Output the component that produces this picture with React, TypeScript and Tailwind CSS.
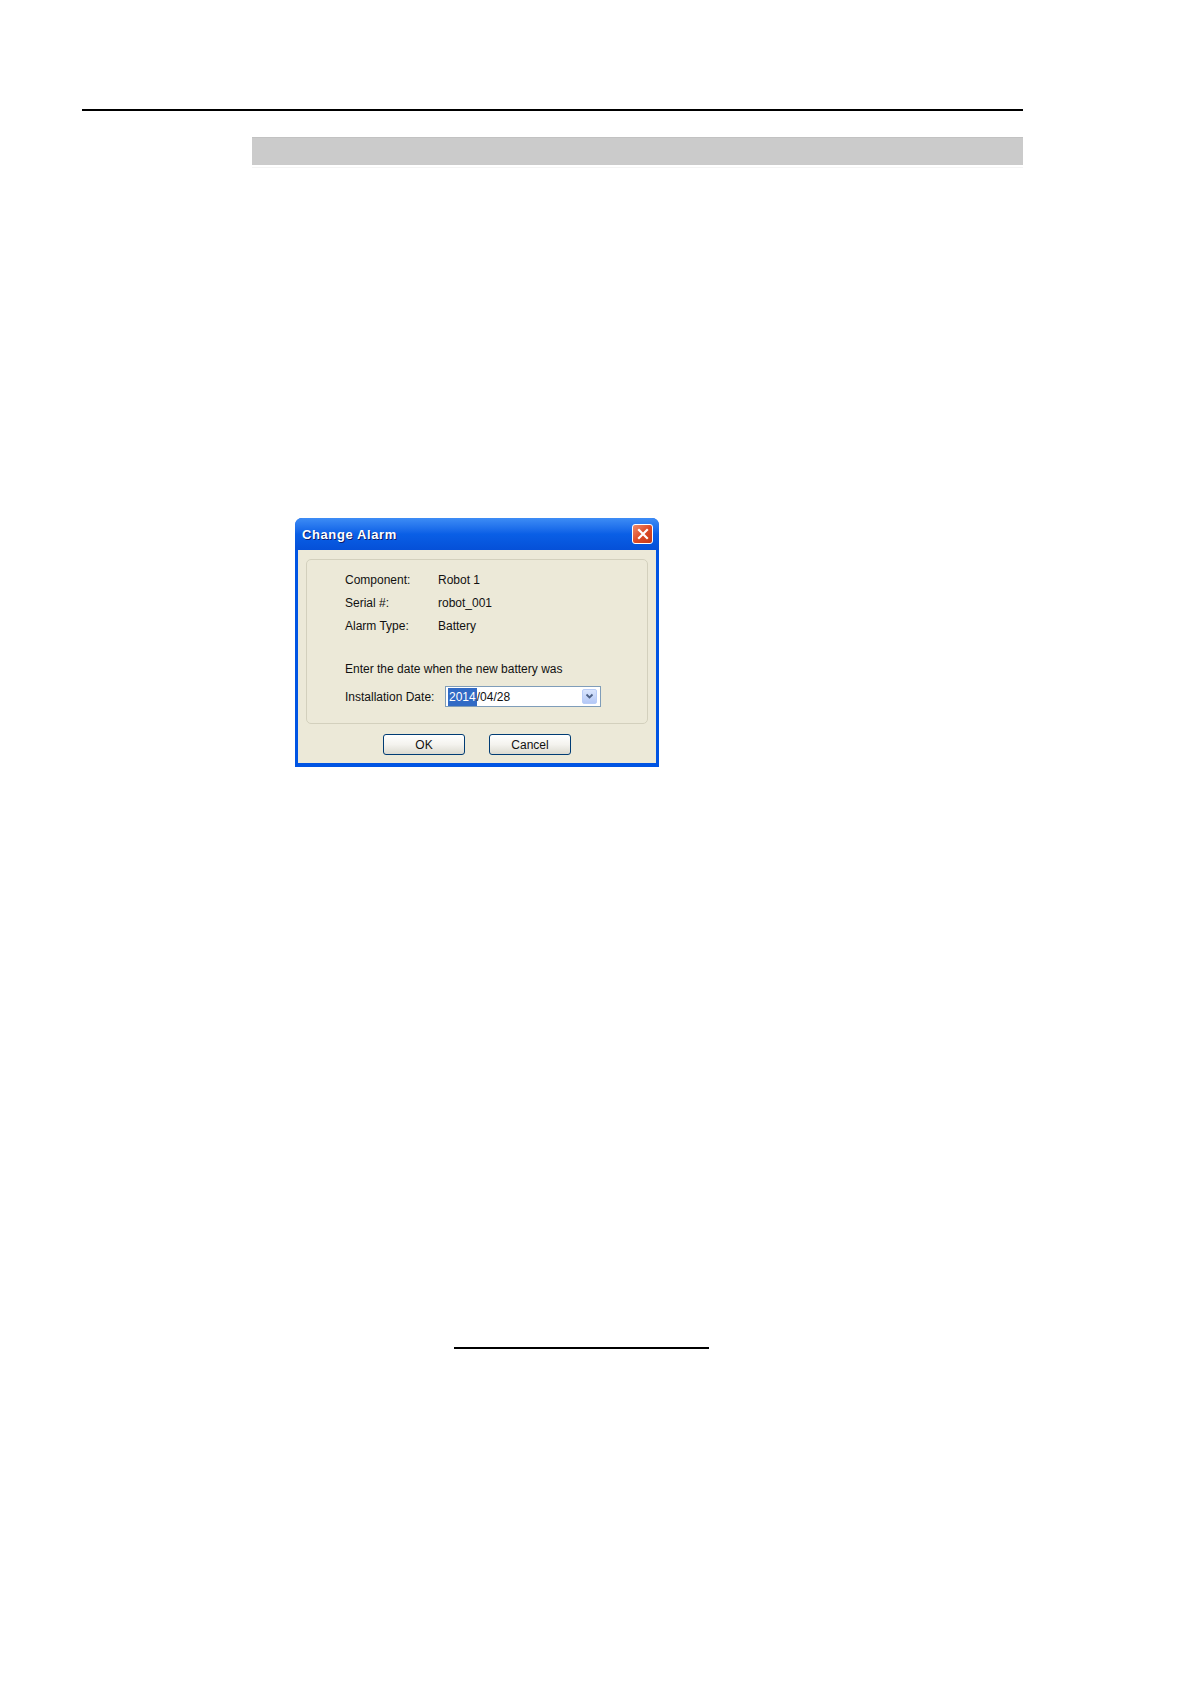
import React from "react";

const font = { fontFamily: '"Liberation Sans", Arial, sans-serif' };

function Row({ label, value }: { label: string; value: string }) {
  return (
    <div className="flex h-[23px] items-center">
      <div className="w-[93px]">{label}</div>
      <div>{value}</div>
    </div>
  );
}

export default function App() {
  return (
    <div className="w-[1191px] h-[1684px] bg-white flex flex-col" style={font}>
      <div className="mt-[109px] ml-[82px] w-[941px] h-[2px] bg-black" />
      <div className="mt-[26px] ml-[252px] w-[771px] h-[28px] bg-[#cbcbcb] border-t border-[#c2c2c2]" />
      <div className="ml-[252px] mt-[2px] w-[771px] h-px bg-[#f4f4f4]" />

      {/* Dialog */}
      <div className="mt-[350px] ml-[295px] w-[364px] h-[249px] flex flex-col rounded-t-[7px] overflow-hidden bg-[#0054e3]">
        <div className="h-[32px] flex items-center justify-between pl-[7px] pr-[6px] bg-gradient-to-b from-[#3d8cf5] via-[#0a5fe6] to-[#0550d8]">
          <span
            className="text-white font-bold text-[13px] tracking-[0.6px] mt-[1px]"
            style={{ textShadow: "1px 1px 0 #0a1c6c" }}
          >
            Change Alarm
          </span>
          <div className="w-[21px] h-[20px] rounded-[3px] border border-white bg-gradient-to-br from-[#ee8a6a] via-[#dd4b27] to-[#c43a16] flex items-center justify-center">
            <svg width="12" height="12" viewBox="0 0 12 12">
              <path d="M2 2 L10 10 M10 2 L2 10" stroke="white" strokeWidth="2.2" strokeLinecap="square" />
            </svg>
          </div>
        </div>
        <div className="flex-1 mx-[3px] mb-[4px] bg-[#ece9d8] flex flex-col px-[8px] pt-[9px] text-[12px] text-[#111]">
          <div className="h-[165px] border border-[#d3d0bd] rounded-[5px] pl-[38px] pt-[8px] flex flex-col">
            <Row label="Component:" value="Robot 1" />
            <Row label="Serial #:" value="robot_001" />
            <Row label="Alarm Type:" value="Battery" />
            <div className="mt-[20px] h-[23px] flex items-center">Enter the date when the new battery was</div>
            <div className="mt-[5px] h-[23px] flex items-center">
              <div className="w-[100px]">Installation Date:</div>
              <div className="w-[156px] h-[21px] border border-[#7f9db9] bg-white flex items-center pl-[2px] pr-[3px]">
                <span className="bg-[#316ac5] text-white px-px">2014</span>
                <span>/04/28</span>
                <div className="ml-auto w-[15px] h-[15px] rounded-[2px] bg-gradient-to-b from-[#d9e5fd] to-[#b4c8f6] border border-[#b9cdf7] flex items-center justify-center">
                  <svg width="9" height="7" viewBox="0 0 9 7">
                    <path d="M1.5 1.5 L4.5 4.5 L7.5 1.5" stroke="#4d6185" strokeWidth="1.8" fill="none" />
                  </svg>
                </div>
              </div>
            </div>
          </div>
          <div className="mt-[10px] flex pl-[77px] gap-[24px]">
            <div className="w-[82px] h-[21px] rounded-[3px] border border-[#003c74] bg-gradient-to-b from-white via-[#f4f3ee] to-[#dcdad0] flex items-center justify-center">
              OK
            </div>
            <div className="w-[82px] h-[21px] rounded-[3px] border border-[#003c74] bg-gradient-to-b from-white via-[#f4f3ee] to-[#dcdad0] flex items-center justify-center">
              Cancel
            </div>
          </div>
        </div>
      </div>

      <div className="mt-[580px] ml-[454px] w-[255px] h-[2px] bg-black" />
    </div>
  );
}
